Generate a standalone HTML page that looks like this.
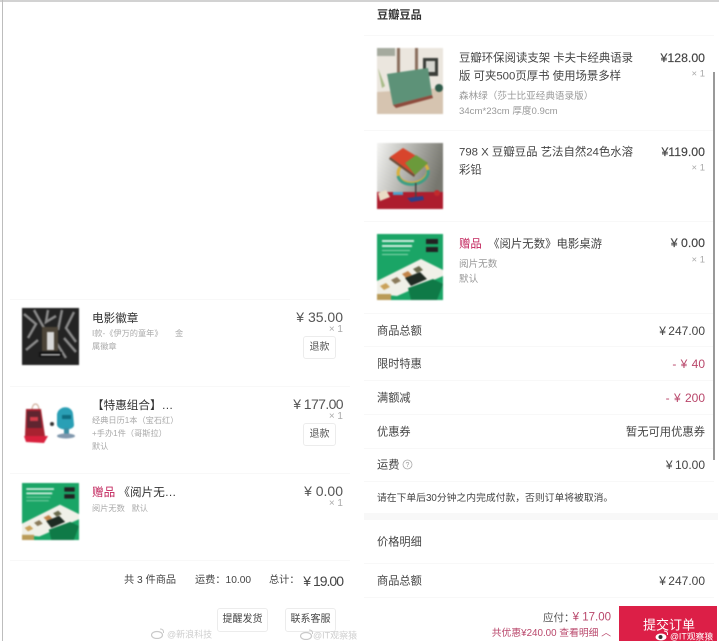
<!DOCTYPE html>
<html lang="zh-CN">
<head>
<meta charset="utf-8">
<title>订单</title>
<style>
html,body{margin:0;padding:0;background:#fff;}
body{width:719px;height:641px;overflow:hidden;position:relative;font-family:"Liberation Sans","Noto Sans CJK SC",sans-serif;color:#333;}
#p{position:absolute;left:0;top:0;width:719px;height:641px;overflow:hidden;filter:blur(.35px);}
.t{position:absolute;white-space:nowrap;line-height:1;transform:translateY(-50%);margin-top:1.5px;}
.d{position:absolute;height:1px;background:#f8f8f8;}
.l{left:10px;width:340px;}
.r{left:364px;width:350px;}
.sub{font-size:8.2px;color:#aaa;left:92px;}
.pr{font-size:14px;color:#555;right:376px;}
.x{font-size:10px;color:#aaa;right:376px;}
.rs{font-size:9.6px;color:#999;left:459px;}
.rt{font-size:11.4px;color:#444;left:459px;}
.rp{font-size:12.3px;color:#444;right:14px;-webkit-text-stroke:.15px #444;}
.rx{font-size:9.5px;color:#aaa;right:14px;}
.rl{font-size:11.2px;color:#444;left:377px;}
.rv{font-size:11.3px;color:#444;right:14px;}
.rm{font-size:12px;color:#444;right:14px;}
.pk{color:#b9476b;}
.b{position:absolute;border:1px solid #ececec;border-radius:3px;box-sizing:border-box;text-align:center;color:#555;background:#fff;}
svg{position:absolute;display:block;}
.im{filter:blur(.8px);}
</style>
</head>
<body>
<div id="p">
<div style="position:absolute;left:0;top:0;width:719px;height:2px;background:#d2d2d2"></div>
<div style="position:absolute;left:2px;top:0;width:1px;height:641px;background:#bdbdbd"></div>

<!-- LEFT -->
<div class="d l" style="top:299px"></div>
<svg class="im" style="left:21.5px;top:308px" width="57" height="57" viewBox="0 0 57 57">
<rect width="57" height="57" fill="#232323"/>
<g stroke="#8a8a8a" stroke-width="2.5" fill="none">
<path d="M2 6 L14 16 L6 30"/><path d="M12 2 L22 20"/><path d="M26 2 L24 14 L34 8"/><path d="M40 2 L36 22"/><path d="M52 4 L44 20 L54 34"/><path d="M4 42 L16 32"/><path d="M42 30 L54 44"/><path d="M34 34 L44 50"/>
</g>
<rect x="20" y="19" width="16" height="24" fill="#4c4438"/>
<rect x="25" y="24" width="7" height="18" fill="#d8d8d8"/>
<rect x="17" y="44" width="23" height="5" fill="#111"/>
<rect x="19" y="46" width="19" height="1.5" fill="#bbb"/>
</svg>
<div class="t" style="left:92px;top:317px;font-size:11.6px;color:#333">电影徽章</div>
<div class="t sub" style="top:332px">I款-《伊万的童年》</div>
<div class="t sub" style="top:332px;left:175px">金</div>
<div class="t sub" style="top:345px">属徽章</div>
<div class="t pr" style="top:315px">¥ 35.00</div>
<div class="t x" style="top:328px">× 1</div>
<div class="b" style="left:303px;top:336px;width:33px;height:23px;font-size:10px;line-height:21px">退款</div>

<div class="d l" style="top:386px"></div>
<svg class="im" style="left:22px;top:400px" width="56" height="48" viewBox="0 0 56 48">
<path d="M10 10 C10 2 17 2 17 10" fill="none" stroke="#c9a08a" stroke-width="1"/>
<path d="M4 9 L19 9 L23 36 L3 36 Z" fill="#a82230"/>
<path d="M5 11 L18 11 L20 28 L5 28 Z" fill="#5f2530"/>
<rect x="8" y="17" width="8" height="4" fill="#d33c4a"/>
<path d="M2 36 L26 36 L22 43 L4 42 Z" fill="#d9213d"/>
<circle cx="30" cy="24" r="2" fill="#333"/>
<path d="M35 14 C37 5 50 5 51 14 L52 25 C52 31 36 31 35 25 Z" fill="#2a9fb5"/>
<rect x="40" y="15" width="9" height="4" fill="#0f6d80"/>
<rect x="42" y="28" width="5" height="7" fill="#3c8ea3"/>
<ellipse cx="44" cy="36" rx="9" ry="2.5" fill="#7f97ad"/>
</svg>
<div class="t" style="left:92px;top:404px;font-size:11.6px;color:#333">【特惠组合】…</div>
<div class="t sub" style="top:419px">经典日历1本（宝石红）</div>
<div class="t sub" style="top:432px">+手办1件（哥斯拉）</div>
<div class="t sub" style="top:445px">默认</div>
<div class="t pr" style="top:402px;letter-spacing:-.6px">¥ 177.00</div>
<div class="t x" style="top:415px">× 1</div>
<div class="b" style="left:303px;top:423px;width:33px;height:23px;font-size:10px;line-height:21px">退款</div>

<div class="d l" style="top:473px"></div>
<svg class="im" style="left:21.5px;top:483px" width="57" height="57" viewBox="0 0 66 66">
<rect width="66" height="66" fill="#1aa566"/>
<rect x="5" y="6" width="32" height="2" fill="#d5f0e2"/><rect x="5" y="11" width="30" height="2" fill="#d5f0e2"/><rect x="5" y="16" width="28" height="1" fill="#8ed8b3"/><rect x="5" y="20" width="26" height="1" fill="#8ed8b3"/>
<rect x="49" y="5" width="12" height="5" fill="#222"/><rect x="49" y="13" width="12" height="5" fill="#222"/>
<path d="M0 47 L44 25 L66 36 L66 42 L20 62 L0 60 Z" fill="#f0f0e8"/>
<path d="M3 52 L9 49 L13 53 L7 56 Z" fill="#caa15a"/><path d="M14 46 L20 43 L24 47 L18 50 Z" fill="#8a7a5a"/><path d="M25 40 L31 37 L35 41 L29 44 Z" fill="#c2844a"/><path d="M36 35 L42 32 L46 36 L40 39 Z" fill="#6a6a4c"/>
<path d="M31 54 L56 45 L66 50 L60 66 L34 66 Z" fill="#0f7a47"/>
<path d="M28 44 L43 38 L50 45 L34 52 Z" fill="#1e2a22"/>
<rect x="0" y="60" width="14" height="6" fill="#b99b58"/>
</svg>
<div class="t" style="left:92px;top:491px;font-size:11.6px;color:#333"><span style="color:#c2255c">赠品</span>&nbsp;《阅片无…</div>
<div class="t sub" style="top:507px">阅片无数&nbsp;&nbsp;&nbsp;默认</div>
<div class="t pr" style="top:489px">¥ 0.00</div>
<div class="t x" style="top:502px">× 1</div>
<div class="d l" style="top:560px"></div>

<div class="t" style="left:124px;top:579px;font-size:10.2px;color:#444">共 3 件商品</div>
<div class="t" style="left:195px;top:579px;font-size:10.2px;color:#444">运费：10.00</div>
<div class="t" style="left:269px;top:579px;font-size:10.2px;color:#444">总计：</div>
<div class="t" style="right:376px;top:579px;font-size:14px;color:#444;letter-spacing:-1px">¥ 19.00</div>
<div class="b" style="left:217px;top:608px;width:51px;height:24px;font-size:10px;line-height:22px;color:#444">提醒发货</div>
<div class="b" style="left:285px;top:608px;width:51px;height:24px;font-size:10px;line-height:22px;color:#444">联系客服</div>

<svg style="left:151px;top:628px" width="14" height="11" viewBox="0 0 14 11"><ellipse cx="6" cy="7" rx="5.5" ry="3.5" fill="none" stroke="#c9c9c9" stroke-width="1.2"/><path d="M9 1 Q13 1 12.5 5" fill="none" stroke="#c9c9c9"/></svg>
<div class="t" style="left:167px;top:633px;font-size:9px;color:#cfcfcf">@新浪科技</div>
<svg style="left:300px;top:629px" width="14" height="11" viewBox="0 0 14 11"><ellipse cx="6" cy="7" rx="5.5" ry="3.5" fill="none" stroke="#c9c9c9" stroke-width="1.2"/><path d="M9 1 Q13 1 12.5 5" fill="none" stroke="#c9c9c9"/></svg>
<div class="t" style="left:313px;top:634px;font-size:9px;color:#cfcfcf">@IT观察猿</div>

<!-- RIGHT -->
<div class="t" style="left:377px;top:14px;font-size:11.2px;font-weight:700;color:#333">豆瓣豆品</div>
<div class="d r" style="top:35px"></div>

<svg class="im" style="left:377px;top:48px" width="66" height="66" viewBox="0 0 66 66">
<rect width="66" height="66" fill="#ebe6de"/>
<rect x="0" y="0" width="18" height="8" fill="#a5aa9e"/>
<rect x="20" y="0" width="3" height="28" fill="#8a6f5e"/><rect x="38" y="0" width="3" height="24" fill="#8a6f5e"/>
<rect x="46" y="10" width="15" height="18" fill="#3a3d38"/><rect x="49" y="13" width="9" height="11" fill="#d5d5cf"/>
<path d="M0 44 L66 40 L66 66 L0 66 Z" fill="#d6c4b0"/>
<path d="M1 20 L8 38 L5 40 Z" fill="#a8bb88"/>
<path d="M10 26 L51 20 L55 47 L16 57 Z" fill="#5d9278"/>
<path d="M16 57 L55 47 L56 50 L19 60 Z" fill="#8d4a3c"/>
<circle cx="62" cy="40" r="4" fill="#2f5c4b"/>
</svg>
<div class="t rt" style="top:57px">豆瓣环保阅读支架 卡夫卡经典语录</div>
<div class="t rt" style="top:75px">版 可夹500页厚书 使用场景多样</div>
<div class="t rs" style="top:95px">森林绿（莎士比亚经典语录版）</div>
<div class="t rs" style="top:110px">34cm*23cm 厚度0.9cm</div>
<div class="t rp" style="top:56px">¥128.00</div>
<div class="t rx" style="top:72px">× 1</div>
<div class="d r" style="top:130px"></div>

<svg class="im" style="left:377px;top:143px" width="66" height="66" viewBox="0 0 66 66">
<defs><linearGradient id="g" x1="0" y1="0" x2="1" y2=".3"><stop offset="0" stop-color="#f4f4f2"/><stop offset="1" stop-color="#77776f"/></linearGradient></defs>
<rect width="66" height="66" fill="url(#g)"/>
<rect y="49" width="66" height="17" fill="#ad1d2e"/>
<ellipse cx="36" cy="29" rx="15" ry="11" transform="rotate(-10 36 29)" fill="none" stroke="#d9b03b" stroke-width="3"/>
<path d="M21 33 A15 11 -10 0 0 51 27" fill="none" stroke="#3e9e86" stroke-width="3"/>
<path d="M13 14 L26 5 L51 20 L38 32 Z" fill="#d8452c"/>
<path d="M28 20 L39 12 L51 20 L38 32 Z" fill="#6b9a3b"/>
<path d="M13 14 L38 32 L37 34 L12 16 Z" fill="#6c4a36"/>
<rect x="38" y="40" width="1.5" height="14" fill="#444"/>
<path d="M30 55 L46 53 L47 57 L34 59 Z" fill="#2b3f8a"/>
<path d="M1 50 L9 47 L13 54 L3 58 Z" fill="#eadcc6"/>
<rect x="16" y="49" width="10" height="3" fill="#4ea1c9"/>
<circle cx="60" cy="50" r="3" fill="#c22a2c"/>
</svg>
<div class="t rt" style="top:151px">798 X 豆瓣豆品 艺法自然24色水溶</div>
<div class="t rt" style="top:169px">彩铅</div>
<div class="t rp" style="top:150px">¥119.00</div>
<div class="t rx" style="top:166px">× 1</div>
<div class="d r" style="top:221px"></div>

<svg class="im" style="left:377px;top:234px" width="66" height="66" viewBox="0 0 66 66">
<rect width="66" height="66" fill="#1aa566"/>
<rect x="5" y="6" width="32" height="2" fill="#d5f0e2"/><rect x="5" y="11" width="30" height="2" fill="#d5f0e2"/><rect x="5" y="16" width="28" height="1" fill="#8ed8b3"/><rect x="5" y="20" width="26" height="1" fill="#8ed8b3"/>
<rect x="49" y="5" width="12" height="5" fill="#222"/><rect x="49" y="13" width="12" height="5" fill="#222"/>
<path d="M0 47 L44 25 L66 36 L66 42 L20 62 L0 60 Z" fill="#f0f0e8"/>
<path d="M3 52 L9 49 L13 53 L7 56 Z" fill="#caa15a"/><path d="M14 46 L20 43 L24 47 L18 50 Z" fill="#8a7a5a"/><path d="M25 40 L31 37 L35 41 L29 44 Z" fill="#c2844a"/><path d="M36 35 L42 32 L46 36 L40 39 Z" fill="#6a6a4c"/>
<path d="M31 54 L56 45 L66 50 L60 66 L34 66 Z" fill="#0f7a47"/>
<path d="M28 44 L43 38 L50 45 L34 52 Z" fill="#1e2a22"/>
<rect x="0" y="60" width="14" height="6" fill="#b99b58"/>
</svg>
<div class="t rt" style="top:243px"><span style="color:#c2255c">赠品</span>&nbsp;&nbsp;《阅片无数》电影桌游</div>
<div class="t rs" style="top:263px">阅片无数</div>
<div class="t rs" style="top:278px">默认</div>
<div class="t rp" style="top:241px">¥ 0.00</div>
<div class="t rx" style="top:258px">× 1</div>
<div class="d r" style="top:313px"></div>

<div class="t rl" style="top:330px">商品总额</div><div class="t rm" style="top:329px">¥&#8201;247.00</div>
<div class="d r" style="top:346px"></div>
<div class="t rl" style="top:363px">限时特惠</div><div class="t rm pk" style="top:362px;word-spacing:1px">- ¥ 40</div>
<div class="d r" style="top:380px"></div>
<div class="t rl" style="top:397px">满额减</div><div class="t rm pk" style="top:396px;word-spacing:1px">- ¥ 200</div>
<div class="d r" style="top:414px"></div>
<div class="t rl" style="top:431px">优惠券</div><div class="t rv" style="top:431px">暂无可用优惠券</div>
<div class="d r" style="top:448px"></div>
<div class="t rl" style="top:464px">运费</div>
<svg style="left:402px;top:459px" width="11" height="11" viewBox="0 0 11 11"><circle cx="5.5" cy="5.5" r="4.5" fill="none" stroke="#aaa" stroke-width=".8"/><text x="5.5" y="8" text-anchor="middle" font-size="7" fill="#999" font-family="Liberation Sans">?</text></svg>
<div class="t rm" style="top:463px">¥&#8201;10.00</div>
<div class="d r" style="top:481px"></div>
<div class="t" style="left:377px;top:497px;font-size:9.8px;color:#444">请在下单后30分钟之内完成付款，否则订单将被取消。</div>
<div style="position:absolute;left:364px;top:513px;width:354px;height:7px;background:#f8f8f8"></div>
<div class="t rl" style="top:541px">价格明细</div>
<div class="d r" style="top:563px"></div>
<div class="t rl" style="top:580px">商品总额</div><div class="t rm" style="top:579px">¥&#8201;247.00</div>
<div class="d r" style="top:597px"></div>

<div style="position:absolute;left:713px;top:72px;width:2px;height:388px;background:#999"></div>

<div class="t" style="left:543px;top:616px;font-size:10.5px;color:#555">应付：</div>
<div class="t pk" style="right:108px;top:616px;font-size:11.5px">¥ 17.00</div>
<div class="t pk" style="right:108px;top:632px;font-size:9.8px">共优惠¥240.00 查看明细 ︿</div>
<div style="position:absolute;left:619px;top:606px;width:98px;height:35px;background:#dc1f47"></div>
<div class="t" style="left:643px;top:623px;font-size:13px;color:#fff">提交订单</div>
<svg style="left:655px;top:630px" width="14" height="11" viewBox="0 0 14 11"><ellipse cx="6" cy="7" rx="5.5" ry="3.5" fill="#fff"/><circle cx="5.5" cy="7" r="2" fill="#333"/><path d="M9 1 Q13 1 12.5 5" fill="none" stroke="#fff"/></svg>
<div class="t" style="left:670px;top:635px;font-size:8.8px;color:#fff">@IT观察猿</div>
</div>
</body>
</html>
